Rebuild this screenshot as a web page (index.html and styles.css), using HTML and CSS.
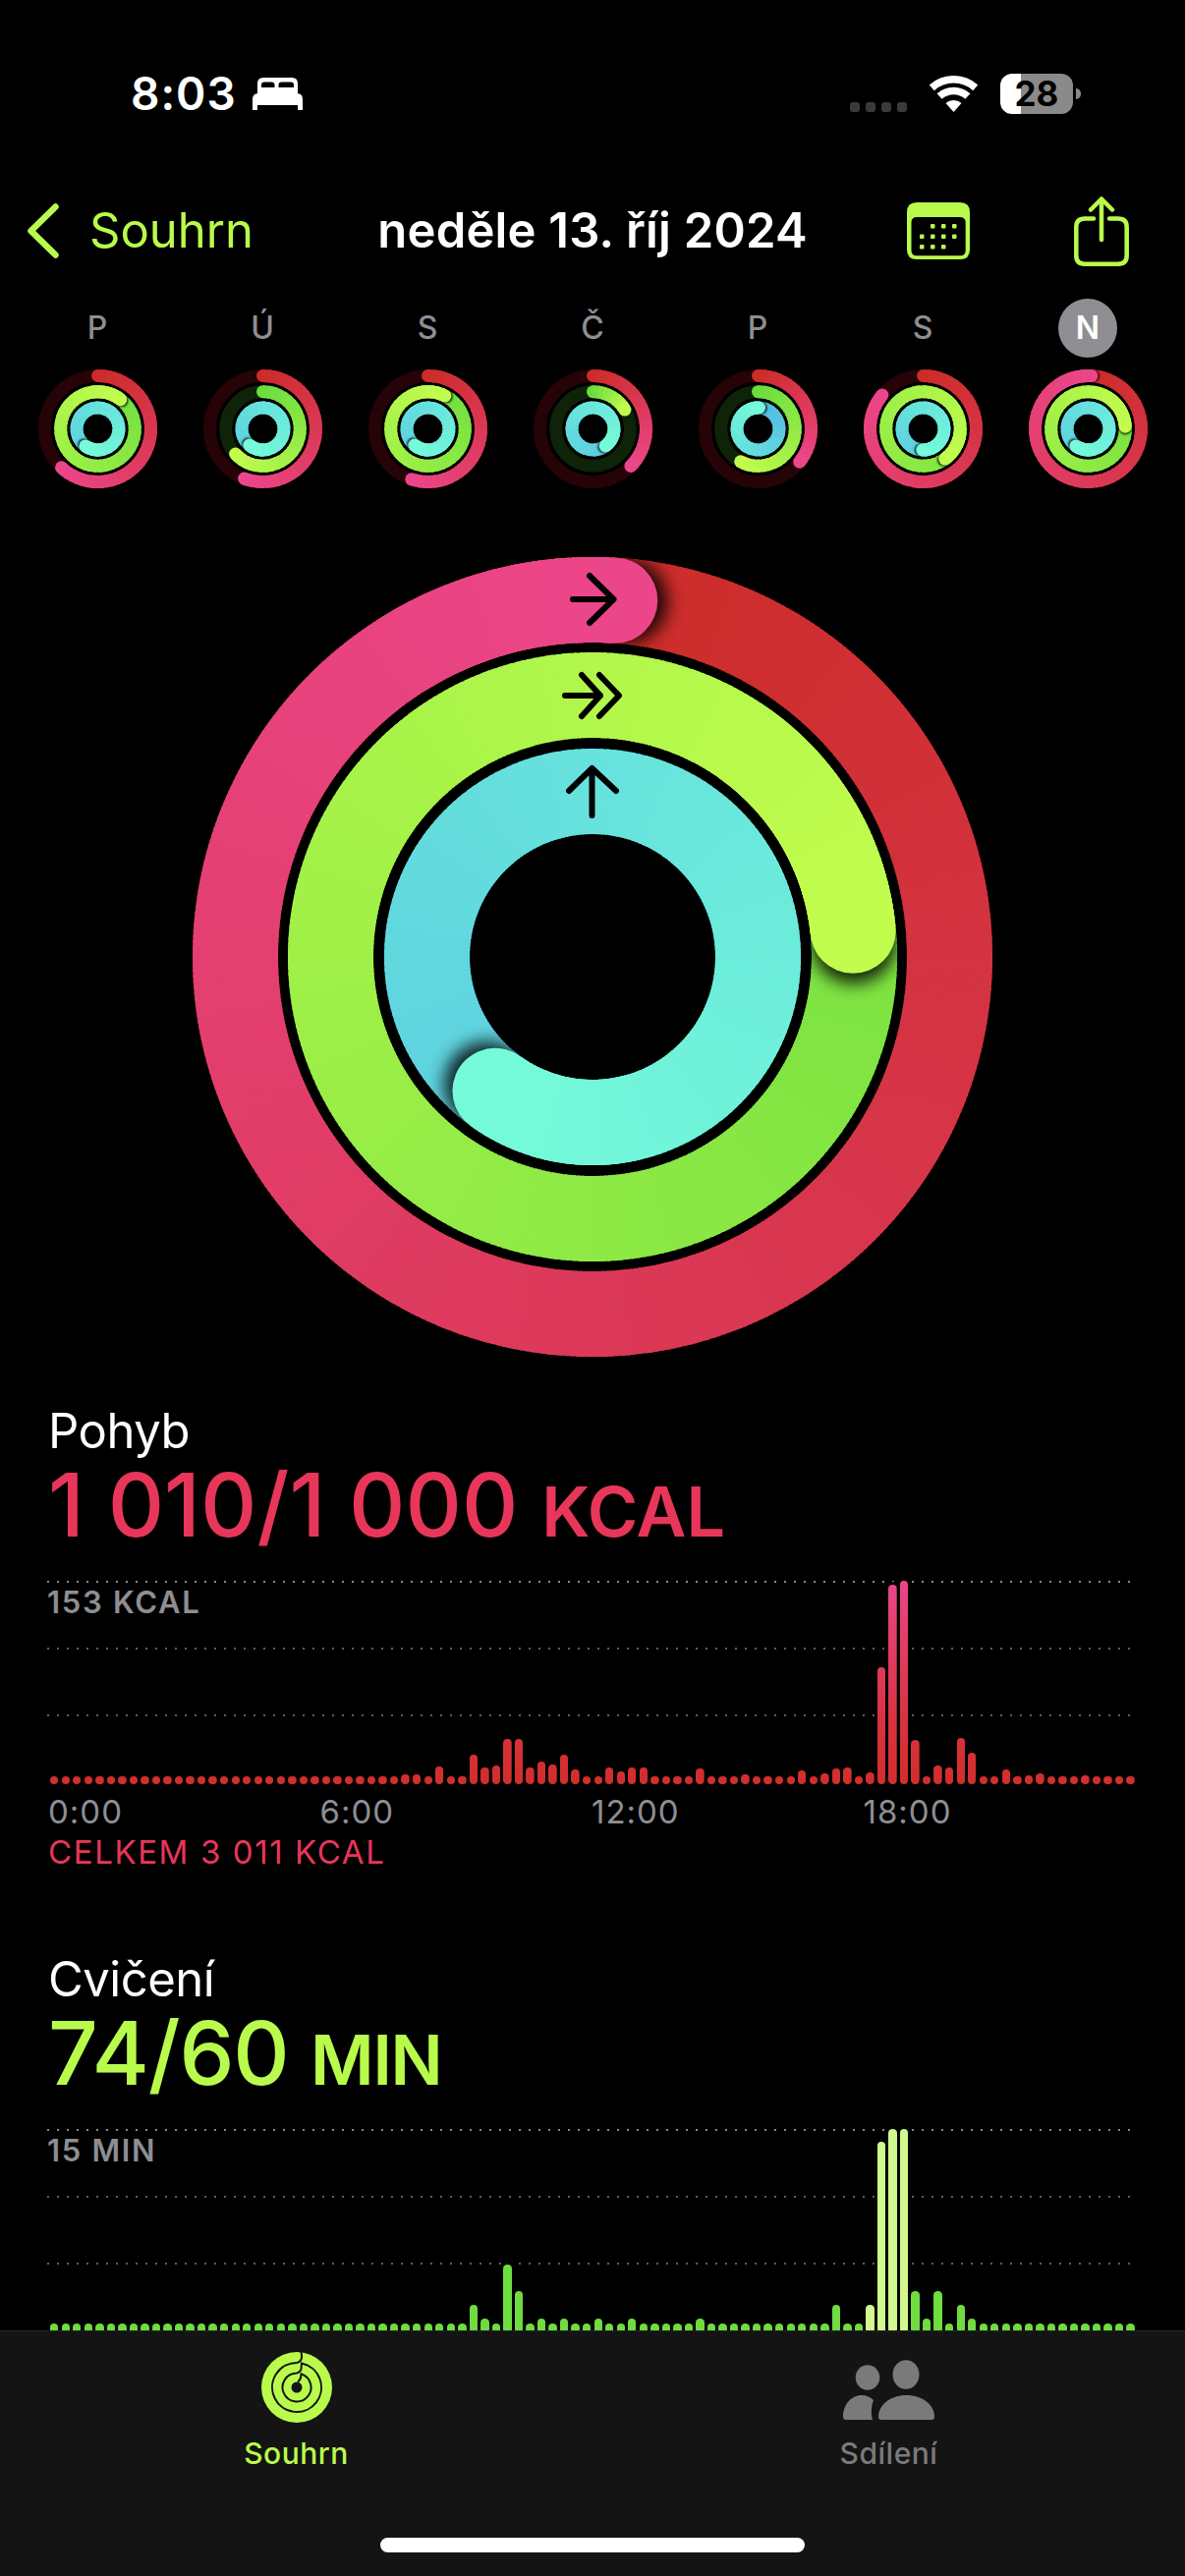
FILE: index.html
```html
<!DOCTYPE html>
<html lang="cs">
<head>
    <meta charset="UTF-8">
    <meta name="viewport" content="width=device-width, initial-scale=1.0">
    <title>Souhrn aktivity</title>
    <link rel="stylesheet" href="styles.css">
</head>
<body>
    <div class="screen">
        <div class="status">
            <div class="status-left">
                <span class="time">8:03</span>
                <svg class="bed" width="51" height="33" viewBox="0 0 51 33">
                    <path fill="#fff" fill-rule="evenodd" d="M5 17V6Q5 0 11 0H40Q46 0 46 6V17ZM9 10V7.5Q9 4.5 12 4.5H19.500Q22.500 4.500 22.500 7.500V10ZM26.500 10V7.500Q26.500 4.500 29.500 4.500H39Q42 4.500 42 7.500V10Z"/>
                    <path fill="#fff" d="M0 33V22Q0 16 6 16H45Q51 16 51 22V33H46V28H5V33Z"/>
                </svg>
            </div>
            <div class="status-right">
                <div class="signal"><i></i><i></i><i></i><i></i></div>
                <svg class="wifi" width="49" height="37" viewBox="0 0 49 37">
                    <path fill="none" stroke="#fff" stroke-width="7.600" d="M2.300 12.300A33.200 33.200 0 0 1 46.700 12.300M10.100 21A21.500 21.500 0 0 1 38.900 21"/>
                    <path fill="#fff" d="M24.500 37L16.500 28.100A12 12 0 0 1 32.500 28.100Z"/>
                </svg>
                <div class="battery">
                    <div class="battery-body">28</div>
                    <div class="battery-nub"></div>
                </div>
            </div>
        </div>

        <div class="nav">
            <a class="back">
                <svg width="32" height="56" viewBox="0 0 32 56">
                    <path fill="none" stroke="#b9fb4c" stroke-width="6.500" stroke-linecap="round" stroke-linejoin="round" d="M28.500 3.500L3.500 28L28.500 52.500"/>
                </svg>
                <span>Souhrn</span>
            </a>
            <h1 class="nav-title">neděle 13. říj 2024</h1>
            <div class="nav-actions">
                <svg width="64" height="58" viewBox="0 0 64 58">
                    <path fill="#b9fb4c" fill-rule="evenodd" d="M10 0H54Q64 0 64 10V48Q64 58 54 58H10Q0 58 0 48V10Q0 0 10 0ZM10 15Q4.500 15 4.500 20.500V49Q4.500 54.300 10 54.300H54Q59.700 54.300 59.700 49V20.500Q59.700 15 54 15Z"/>
                    <g fill="#b9fb4c">
                        <rect x="24" y="22" width="4.500" height="4.500" rx="1"/><rect x="35" y="22" width="4.500" height="4.500" rx="1"/><rect x="46" y="22" width="4.500" height="4.500" rx="1"/>
                        <rect x="13" y="32.500" width="4.500" height="4.500" rx="1"/><rect x="24" y="32.500" width="4.500" height="4.500" rx="1"/><rect x="35" y="32.500" width="4.500" height="4.500" rx="1"/><rect x="46" y="32.500" width="4.500" height="4.500" rx="1"/>
                        <rect x="13" y="43" width="4.500" height="4.500" rx="1"/><rect x="24" y="43" width="4.500" height="4.500" rx="1"/><rect x="35" y="43" width="4.500" height="4.500" rx="1"/>
                    </g>
                </svg>
                <svg width="56" height="71" viewBox="0 0 56 71">
                    <path fill="none" stroke="#b9fb4c" stroke-width="4.500" stroke-linecap="round" stroke-linejoin="round" d="M20 22.500H11Q2.300 22.500 2.300 31V60Q2.300 68.700 11 68.700H45Q53.700 68.700 53.700 60V31Q53.700 22.500 45 22.500H36M28 44V2.500M17 13.500L28 2.500L39 13.500"/>
                </svg>
            </div>
        </div>

        <div class="week">
            <div class="day"><span class="day-name">P</span><svg class="week-ring" data-move="0.62" data-ex="1.105" data-stand="1.6"></svg></div>
            <div class="day"><span class="day-name">Ú</span><svg class="week-ring" data-move="0.557" data-ex="0.632" data-stand="1.61"></svg></div>
            <div class="day"><span class="day-name">S</span><svg class="week-ring" data-move="0.55" data-ex="1.076" data-stand="1.61"></svg></div>
            <div class="day"><span class="day-name">Č</span><svg class="week-ring" data-move="0.374" data-ex="0.164" data-stand="1.4"></svg></div>
            <div class="day"><span class="day-name">P</span><svg class="week-ring" data-move="0.357" data-ex="0.578" data-stand="1.0075"></svg></div>
            <div class="day"><span class="day-name">S</span><svg class="week-ring" data-move="0.86" data-ex="1.4" data-stand="1.505"></svg></div>
            <div class="day"><span class="day-name today">N</span><svg class="week-ring" data-move="1.01" data-ex="1.24" data-stand="1.6"></svg></div>
        </div>

        <svg class="main-ring" id="mainRing" width="814" height="814" viewBox="0 0 814 814">
            <g id="mainRingArcs"></g>
            <g fill="none" stroke="#000" stroke-width="6" stroke-linecap="round" stroke-linejoin="round">
                <path d="M387 43H428.500M404 19L428.500 43L404 67"/>
                <path d="M379 141H415M396 120L415 141L396 162M414 120L434 141L414 162"/>
                <path d="M406.500 263V215M383 238L406.500 215L431 238"/>
            </g>
        </svg>

        <section class="stat stat-move">
            <h2 class="stat-name">Pohyb</h2>
            <p class="stat-value">1 010/1 000 <small>KCAL</small></p>
            <div class="chart">
                <div class="grid-lines"><i></i><i></i><i></i></div>
                <span class="chart-max">153 KCAL</span>
                <div class="bars" id="moveBars"></div>
            </div>
            <div class="axis"><span>0:00</span><span>6:00</span><span>12:00</span><span>18:00</span></div>
            <p class="total">CELKEM 3 011 KCAL</p>
        </section>

        <section class="stat stat-exercise">
            <h2 class="stat-name">Cvičení</h2>
            <p class="stat-value">74/60 <small>MIN</small></p>
            <div class="chart">
                <div class="grid-lines"><i></i><i></i><i></i></div>
                <span class="chart-max">15 MIN</span>
                <div class="bars" id="exerciseBars"></div>
            </div>
        </section>

        <div class="tabbar">
            <div class="tabs">
                <div class="tab tab-active">
                    <svg width="72" height="72" viewBox="0 0 72 72">
                        <circle cx="36" cy="36" r="36" fill="#b9fb4c"/>
                        <g fill="none" stroke="#141414" stroke-width="2">
                            <path d="M40.500 0C41.500 5 41.500 10 36 11A25 25 0 1 0 41 11.500C40 15 42.500 19.500 36 21.500A14.500 14.500 0 1 0 40.500 22.200C40 25 41 28 37 30.500"/>
                        </g>
                        <circle cx="36" cy="36" r="5.500" fill="#141414"/>
                    </svg>
                    <span>Souhrn</span>
                </div>
                <div class="tab">
                    <svg width="93" height="72" viewBox="0 -4 93 72">
                        <g fill="#7a7a7a">
                            <ellipse cx="64" cy="19" rx="13.500" ry="14.700"/>
                            <ellipse cx="25" cy="22" rx="12.300" ry="12.700"/>
                            <path d="M36 62C36 50 48 40 64.500 40C81 40 93 50 93 62Q93 65 90 65H39Q36 65 36 62Z"/>
                            <path d="M0 62C0 50 8 40 19 40C24 40 28 42 31 45C29 50 28 58 30 65H3Q0 65 0 62Z"/>
                        </g>
                    </svg>
                    <span>Sdílení</span>
                </div>
            </div>
            <div class="home-indicator"></div>
        </div>
    </div>

    <script src="script.js"></script>
</body>
</html>
```

FILE: styles.css
```css
html, body {
    margin: 0;
    background-color: #000;
}

.screen {
    position: relative;
    width: 1206px;
    height: 2622px;
    overflow: hidden;
    background-color: #000;
    color: #fff;
    font-family: "Inter", "Liberation Sans", sans-serif;
}

/* status bar */
.status {
    display: flex;
    justify-content: space-between;
    height: 190px;
    box-sizing: border-box;
    padding: 73px 106px 0 133px;
}

.status-left {
    display: flex;
    gap: 16px;
}

.time {
    font-size: 46px;
    line-height: 44px;
    font-weight: 600;
    letter-spacing: 1px;
}

.bed {
    margin-top: 6px;
}

.status-right {
    display: flex;
    align-items: flex-start;
    gap: 23px;
}

.signal {
    display: flex;
    gap: 6px;
    margin-top: 31px;
}

.signal i {
    width: 10px;
    height: 10px;
    border-radius: 3px;
    background-color: #3a3a3a;
}

.wifi {
    margin-top: 4px;
}

.battery {
    display: flex;
    align-items: center;
    gap: 3px;
    margin-top: 2px;
}

.battery-body {
    width: 74px;
    height: 41px;
    border-radius: 12px;
    background: linear-gradient(90deg, #fff 21px, #8a8a8a 21px);
    color: #000;
    font-size: 35px;
    font-weight: 700;
    line-height: 41px;
    text-align: center;
}

.battery-nub {
    width: 5px;
    height: 11px;
    border-radius: 0 5px 5px 0;
    background-color: #8a8a8a;
}

/* nav row */
.nav {
    display: grid;
    grid-template-columns: 1fr auto 1fr;
    align-items: center;
    height: 90px;
}

.back {
    display: flex;
    align-items: center;
    gap: 31px;
    padding-left: 28px;
    color: #b9fb4c;
    font-size: 49px;
    line-height: 60px;
}

.nav-title {
    margin: 0;
    font-size: 49px;
    line-height: 60px;
    font-weight: 600;
    letter-spacing: 0.2px;
}

.nav-actions {
    display: flex;
    justify-content: flex-end;
    align-items: center;
    gap: 106px;
    padding-right: 57px;
}

/* week strip */
.week {
    display: grid;
    grid-template-columns: repeat(7, 168px);
    padding: 24px 15px 0;
}

.day {
    display: flex;
    flex-direction: column;
    align-items: center;
    gap: 12px;
}

.day-name {
    width: 60px;
    height: 60px;
    border-radius: 50%;
    color: #8e8e93;
    font-size: 32px;
    font-weight: 500;
    line-height: 60px;
    text-align: center;
}

.day-name.today {
    background-color: #8e8e93;
    color: #fff;
    font-weight: 600;
}

.week-ring {
    display: block;
    width: 121px;
    height: 121px;
}

.main-ring {
    display: block;
    margin: 70px auto 0;
}

/* stats */
.stat {
    padding-left: 49px;
}

.stat-move {
    margin-top: 46px;
}

.stat-exercise {
    margin-top: 80px;
}

.stat-name {
    margin: 0;
    font-size: 49px;
    line-height: 60px;
    font-weight: 400;
    letter-spacing: -0.5px;
}

.stat-value {
    margin: 0;
    font-size: 89px;
    line-height: 90px;
    font-weight: 500;
}

.stat-value small {
    font-size: 70px;
    font-weight: 600;
}

.stat-move .stat-value,
.total {
    color: #e8365a;
}

.stat-exercise .stat-value {
    color: #b9fb4c;
    letter-spacing: -1.2px;
}

.chart {
    display: grid;
    width: 1107px;
    height: 207px;
    margin: 25px 0 0 -1px;
}

.chart > * {
    grid-area: 1 / 1;
}

.grid-lines {
    display: flex;
    flex-direction: column;
    gap: 66px;
}

.grid-lines i {
    height: 2px;
    background: repeating-linear-gradient(90deg, #5f5f5f 0 2px, transparent 2px 10px);
}

.grid-lines i:first-child {
    background: repeating-linear-gradient(90deg, #8a8a8a 0 2px, transparent 2px 10px);
}

.chart-max {
    padding-top: 6px;
    color: #8e8e93;
    font-size: 31px;
    font-weight: 600;
    line-height: 31px;
    letter-spacing: 1.700px;
}

.bars {
    display: flex;
    justify-content: space-between;
    align-items: flex-end;
    width: 1104px;
    margin-left: 3px;
}

.bar {
    flex: none;
    width: 8.400px;
    border-radius: 4.200px;
    box-shadow: 0 0 0 3px #000;
}

.stat-move .bar {
    background: linear-gradient(to top, #d12e2c 0, #d9323f 30%, #e03a5c 60%, #ec468a 100%) bottom / 100% 207px no-repeat;
}

.stat-exercise .chart {
    height: 208px;
}

.stat-exercise .bar {
    background-color: #6fdc3f;
}

.stat-exercise .bar.peak {
    background-color: #d0f88f;
}

.axis {
    display: grid;
    grid-template-columns: repeat(4, 276.500px);
    margin-top: 8px;
    color: #8e8e93;
    font-size: 33px;
    line-height: 40px;
    letter-spacing: 1px;
}

.total {
    margin: 1px 0 0;
    font-size: 33px;
    line-height: 40px;
    letter-spacing: 1.600px;
}

/* tab bar sits over the scrolled charts */
.tabbar {
    position: absolute;
    left: 0;
    right: 0;
    bottom: 0;
    display: flex;
    flex-direction: column;
    justify-content: space-between;
    height: 250px;
    box-sizing: border-box;
    padding-bottom: 24px;
    border-top: 1px solid #262626;
    background-color: #141414;
}

.tabs {
    display: grid;
    grid-template-columns: 1fr 1fr;
    padding-top: 21px;
}

.tab {
    display: flex;
    flex-direction: column;
    align-items: center;
    gap: 13px;
    color: #7a7a7a;
    font-size: 30px;
    font-weight: 500;
    line-height: 36px;
    letter-spacing: 0.5px;
}

.tab-active {
    color: #b9fb4c;
}

.home-indicator {
    align-self: center;
    width: 432px;
    height: 15px;
    border-radius: 8px;
    background-color: #fff;
}
```

FILE: script.js
```js
// ring colours: [start of arc, head of arc, empty track]
const RING_COLORS = {
    move: ['#cc2c28', '#ec468a', '#250306'],
    ex: ['#6bdc3e', '#c2fd4e', '#0e2308'],
    stand: ['#4fb8e3', '#75fbd9', '#0b2a2c']
};

const SVG_NS = 'http://www.w3.org/2000/svg';
let clipCount = 0;

function el(parent, name, attrs) {
    const node = document.createElementNS(SVG_NS, name);
    for (const key in attrs) {
        node.setAttribute(key, attrs[key]);
    }
    parent.appendChild(node);
    return node;
}

function mix(a, b, t) {
    const out = [1, 3, 5].map(i => {
        const from = parseInt(a.substr(i, 2), 16);
        const to = parseInt(b.substr(i, 2), 16);
        return Math.round(from + (to - from) * t);
    });
    return `rgb(${out.join(',')})`;
}

function drawRing(group, c, r, w, pct, colors) {
    const point = (frac, radius) => {
        const a = frac * 2 * Math.PI;
        return [c + radius * Math.sin(a), c - radius * Math.cos(a)];
    };
    const tail = Math.max(0, pct - 1);
    const steps = Math.max(8, Math.round(r * 1.2));

    const drawArc = (from, to) => {
        const n = Math.max(1, Math.ceil((to - from) * steps));
        for (let i = 0; i < n; i++) {
            const f0 = from + (to - from) * i / n;
            // small overlap so no seams show between the pieces
            const f1 = Math.min(to, from + (to - from) * (i + 1.5) / n);
            const p0 = point(f0, r);
            const p1 = point(f1, r);
            el(group, 'path', {
                d: `M${p0[0]} ${p0[1]}A${r} ${r} 0 0 1 ${p1[0]} ${p1[1]}`,
                fill: 'none',
                stroke: mix(colors[0], colors[1], (f0 + f1) / 2 / pct),
                'stroke-width': w
            });
        }
    };

    el(group, 'circle', { cx: c, cy: c, r: r, fill: 'none', stroke: colors[2], 'stroke-width': w });

    if (tail === 0) {
        const start = point(0, r);
        el(group, 'circle', { cx: start[0], cy: start[1], r: w / 2, fill: colors[0] });
    }
    drawArc(tail, pct);

    if (pct > 1) {
        // head casts a shadow on the lap under it, only inside its own band
        const id = 'band' + (++clipCount);
        const ring = (radius) => `M${c - radius} ${c}a${radius} ${radius} 0 1 0 ${radius * 2} 0a${radius} ${radius} 0 1 0 ${-radius * 2} 0Z`;
        const clip = el(group, 'clipPath', { id: id });
        el(clip, 'path', { d: ring(r + w / 2) + ring(r - w / 2), 'clip-rule': 'evenodd' });
        const shadowGroup = el(group, 'g', { 'clip-path': `url(#${id})` });
        const ahead = point(pct + w * 0.12 / (2 * Math.PI * r), r);
        el(shadowGroup, 'circle', {
            cx: ahead[0],
            cy: ahead[1],
            r: w * 0.5,
            fill: '#000',
            opacity: 0.85,
            style: `filter: blur(${w * 0.1}px)`
        });
        drawArc(pct - Math.min(0.14, w / r / 2.4), pct);
    }

    const head = point(pct, r);
    el(group, 'circle', { cx: head[0], cy: head[1], r: w / 2, fill: colors[1] });
}

function drawRings(group, c, radii, w, values) {
    drawRing(group, c, radii[0], w, values.move, RING_COLORS.move);
    drawRing(group, c, radii[1], w, values.ex, RING_COLORS.ex);
    drawRing(group, c, radii[2], w, values.stand, RING_COLORS.stand);
}

document.querySelectorAll('.week-ring').forEach(svg => {
    svg.setAttribute('viewBox', '0 0 121 121');
    drawRings(svg, 60.5, [54, 37.8, 21.5], 13, {
        move: +svg.dataset.move,
        ex: +svg.dataset.ex,
        stand: +svg.dataset.stand
    });
});

drawRings(document.getElementById('mainRingArcs'), 407, [363.5, 266.5, 168.5], 87, {
    move: 1.01,
    ex: 1.234,
    stand: 1.6
});

// hour buckets, 15 minutes each; anything not listed is just the dot
const MOVE_BARS = {
    31: 10, 32: 10, 34: 18, 37: 30, 38: 17, 39: 19, 40: 46, 41: 46, 42: 17, 43: 23, 44: 20, 45: 30, 46: 15,
    49: 17, 50: 13, 51: 17, 52: 17, 57: 16, 61: 10, 66: 14, 68: 11, 69: 16, 70: 17, 72: 12,
    73: 119, 74: 203, 75: 207, 76: 45, 78: 19, 79: 17, 80: 47, 81: 32, 84: 15, 86: 9, 87: 11, 91: 9
};
const EXERCISE_BARS = {
    37: 29, 38: 15, 40: 70, 41: 43, 43: 15, 45: 15, 48: 15, 51: 15, 57: 15, 69: 29, 72: 29,
    73: 195, 74: 208, 75: 208, 76: 43, 77: 15, 78: 43, 80: 29, 81: 15
};

function fillBars(id, data, dot, peaks) {
    const box = document.getElementById(id);
    for (let i = 0; i < 96; i++) {
        const bar = document.createElement('div');
        bar.className = peaks.includes(i) ? 'bar peak' : 'bar';
        bar.style.height = (data[i] || dot) + 'px';
        box.appendChild(bar);
    }
}

fillBars('moveBars', MOVE_BARS, 8.4, []);
fillBars('exerciseBars', EXERCISE_BARS, 10, [72, 73, 74, 75]);
```
